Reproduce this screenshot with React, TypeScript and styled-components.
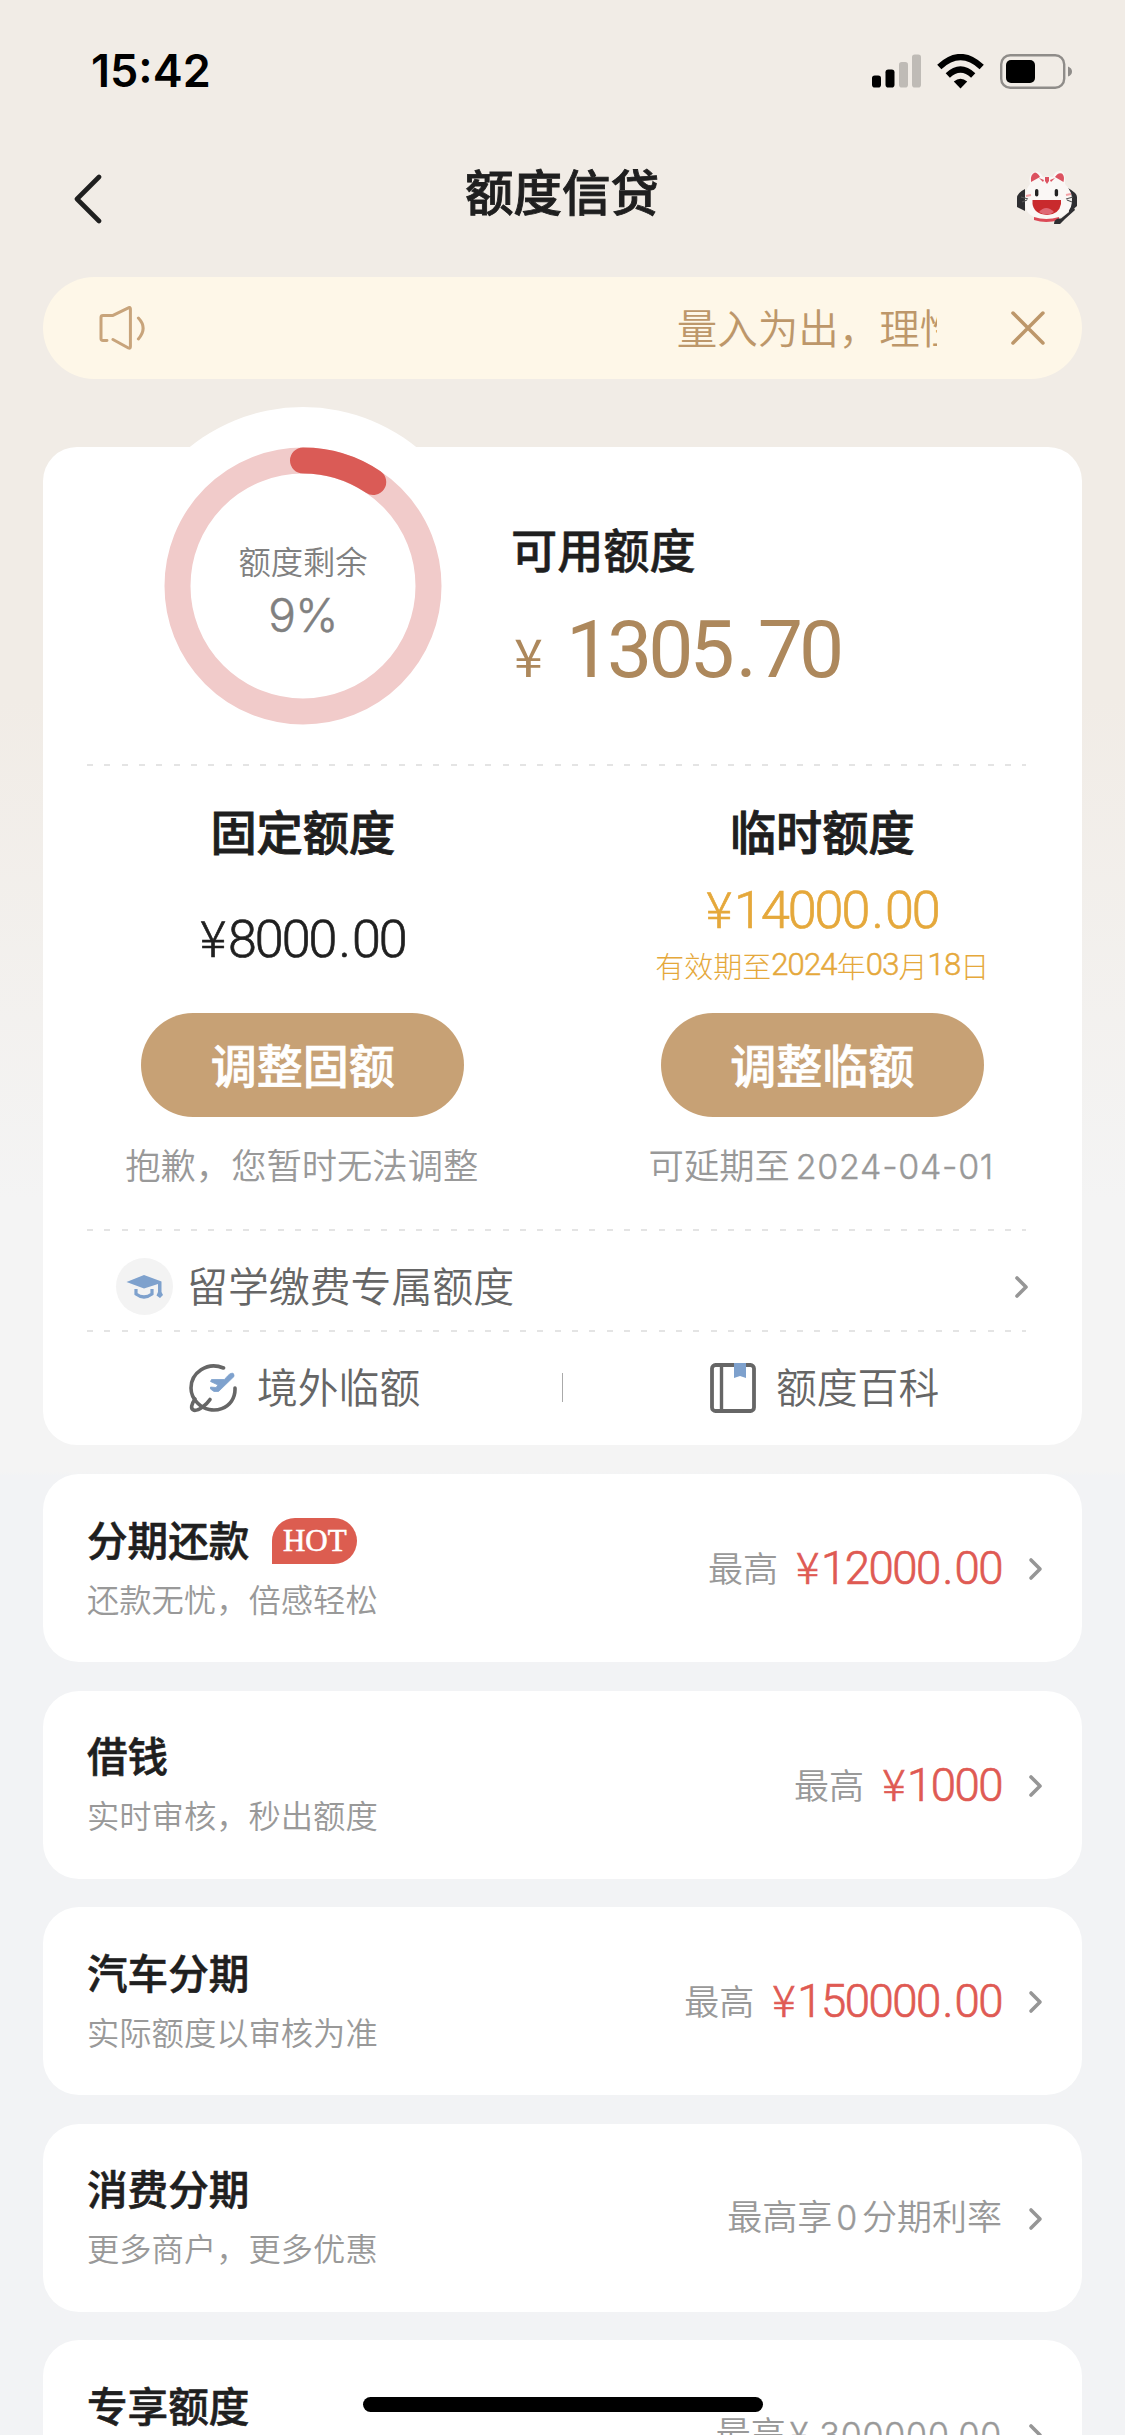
import React from "react";
import styled, { createGlobalStyle } from "styled-components";

const CJK = `"Noto Sans CJK SC", "Noto Sans", sans-serif`;
const NUM = `Roboto, "Noto Sans CJK SC", sans-serif`;

const GlobalStyle = createGlobalStyle`
  * { box-sizing: border-box; }
  body { margin: 0; background: #f2f3f5; }
`;

const Screen = styled.div`
  position: relative;
  width: 1125px;
  height: 2435px;
  overflow: hidden;
  font-family: ${CJK};
  color: #1f1f1f;
  background: linear-gradient(#f1ece6 0, #f1ece6 700px, #f4f4f4 1200px, #f4f4f4 1472px, #f2f3f5 1476px);
`;

const StatusBar = styled.header`
  height: 142px;
  padding: 0 52px 0 91px;
  display: flex;
  align-items: center;
  justify-content: space-between;
`;

const Clock = styled.span`
  font: 600 45px/50px Inter, sans-serif;
  color: #000;
`;

const StatusIcons = styled.div`
  display: flex;
  align-items: center;
  gap: 16px;
  svg { display: block; }
`;

const NavBar = styled.nav`
  height: 134px;
  padding: 0 48px 0 74px;
  display: grid;
  grid-template-columns: 67px 1fr 94px;
  svg { display: block; margin-top: 28px; justify-self: end; }
  svg:first-child { margin-top: 32px; justify-self: start; }
`;

const PageTitle = styled.h1`
  margin: 15px 0 0;
  text-align: center;
  font-size: 48.5px;
  line-height: 66px;
  font-weight: 500;
  -webkit-text-stroke: 0.9px currentColor;
`;

const Notice = styled.section`
  height: 102px;
  margin: 1px 43px 68px;
  padding: 0 37px 0 56px;
  border-radius: 51px;
  background: #fef7e8;
  color: #bd976a;
  display: flex;
  align-items: center;
  svg { display: block; }
`;

const Ticker = styled.div`
  width: 261px;
  margin-left: 531px;
  margin-right: 74px;
  padding-bottom: 3px;
  overflow: hidden;
  white-space: nowrap;
  font-size: 40.5px;
  line-height: 60px;
  font-weight: 350;
`;

const LimitCard = styled.main`
  height: 998px;
  margin: 0 43px 29px;
  border-radius: 34px;
  background: #fff;
`;

const Summary = styled.section`
  height: 317px;
  display: flex;
`;

const Gauge = styled.div`
  width: 360px;
  height: 360px;
  margin: -40px 0 0 80px;
  border-radius: 50%;
  background: #fff;
  display: grid;
  place-items: center;
  > * { grid-area: 1 / 1; }
  svg { margin-top: -2px; }
`;

const GaugeText = styled.div`
  margin-top: 5px;
  text-align: center;
  color: #808080;
  font-size: 32.3px;
  line-height: 48px;
  font-weight: 350;
`;

const GaugePercent = styled.div`
  margin-top: 2px;
  font: 300 46px/58px Inter, sans-serif;
  letter-spacing: -0.6px;
  -webkit-text-stroke: 0.5px currentColor;
`;

const Available = styled.div`
  margin: 71px 0 0 28px;
`;

const Heading = styled.h2<{ $stroke?: number }>`
  margin: 0;
  font-size: 46.2px;
  line-height: 60px;
  font-weight: 500;
  white-space: nowrap;
  -webkit-text-stroke: ${(p) => p.$stroke ?? 0.9}px currentColor;
`;

const BigAmount = styled.div`
  margin: 24px 0 0 3px;
`;

const MoneyText = styled.div<{ $size: number; $track: number; $color: string; $weight: number }>`
  font-family: ${NUM};
  font-size: ${(p) => p.$size}px;
  line-height: 1.2;
  letter-spacing: ${(p) => p.$track}px;
  font-weight: ${(p) => p.$weight};
  -webkit-text-stroke: ${(p) => (p.$weight < 400 ? 0.7 : 0)}px currentColor;
  color: ${(p) => p.$color};
  white-space: nowrap;
`;

const Yen = styled.span<{ $size: string; $gap: string }>`
  font-family: ${CJK};
  font-size: ${(p) => p.$size};
  margin-right: ${(p) => p.$gap};
  line-height: 1;
`;

const Dot = styled.span`
  margin: 0 0.06em 0 0.06em;
`;

const Divider = styled.hr`
  position: relative;
  height: 2px;
  margin: 0 56px 0 44px;
  border: 0;
  background: repeating-linear-gradient(90deg, #e4e4e4 0 6px, transparent 6px 17.32px);
`;

const Columns = styled.section`
  height: 463px;
  display: grid;
  grid-template-columns: 1fr 1fr;
`;

const Column = styled.div`
  padding-top: 34px;
  display: flex;
  flex-direction: column;
  align-items: center;
`;

const AmountBox = styled.div<{ $top: number }>`
  height: 153px;
  padding-top: ${(p) => p.$top}px;
  display: flex;
  flex-direction: column;
  align-items: center;
`;

const Expiry = styled.div`
  margin-top: 1px;
  display: flex;
  align-items: center;
  font-size: 29px;
  line-height: 44px;
  font-weight: 300;
  color: #e5a83b;
  white-space: nowrap;
  b { font: 300 31px/44px ${NUM}; letter-spacing: -0.8px; -webkit-text-stroke: 0.5px currentColor; }
`;

const PillButton = styled.button`
  width: 323px;
  height: 104px;
  padding: 0 0 5px;
  border: 0;
  border-radius: 52px;
  background: #c7a175;
  color: #fff;
  font: 500 46px/60px ${CJK};
  -webkit-text-stroke: 0.7px currentColor;
`;

const Caption = styled.div`
  margin-top: 21px;
  margin-right: 2px;
  font-size: 35.3px;
  line-height: 52px;
  font-weight: 350;
  color: #999;
  white-space: nowrap;
  span { font: 300 34px/52px Inter, sans-serif; letter-spacing: 0.7px; margin-left: 6px; -webkit-text-stroke: 0.4px currentColor; }
`;

const LinkRow = styled.section`
  height: 99px;
  padding: 12px 53px 0 73px;
  display: flex;
  align-items: center;
  color: #666;
  font-size: 40.9px;
  line-height: 60px;
  font-weight: 350;
`;

const RoundIcon = styled.span`
  width: 57px;
  height: 57px;
  margin-right: 14px;
  border-radius: 50%;
  background: #f3f3f3;
  display: grid;
  place-items: center;
`;

const LinkLabel = styled.span`
  flex: 1;
  padding-bottom: 4px;
`;

const Shortcuts = styled.section`
  height: 113px;
  padding-bottom: 2px;
  display: grid;
  grid-template-columns: 519px 1px 519px;
  align-items: center;
  color: #666;
  font-size: 40.8px;
  line-height: 60px;
  font-weight: 350;
`;

const Shortcut = styled.div<{ $pad: number }>`
  padding-left: ${(p) => p.$pad}px;
  display: flex;
  align-items: center;
  gap: 20px;
  span { padding-bottom: 4px; }
`;

const Separator = styled.i`
  height: 29px;
  background: #aaa;
`;

const ProductList = styled.ul`
  margin: 0 43px;
  padding: 0;
  list-style: none;
  display: grid;
  gap: 28.5px;
`;

const Product = styled.li`
  height: 188px;
  padding: 0 39px 0 44px;
  border-radius: 36px;
  background: #fff;
  display: flex;
  align-items: center;
  svg { display: block; margin: 2px 0 0 26px; }
`;

const ProductInfo = styled.div`
  flex: 1;
`;

const ProductName = styled.h3`
  margin: 0;
  height: 60px;
  display: flex;
  align-items: center;
  gap: 23px;
  font-size: 40.6px;
  line-height: 58px;
  padding-bottom: 2px;
  font-weight: 500;
  -webkit-text-stroke: 0.6px currentColor;
`;

const HotBadge = styled.span`
  width: 85px;
  height: 46px;
  margin-top: 4px;
  border-radius: 23px 23px 23px 0;
  background: #dc5d50;
  color: #fff;
  text-align: center;
  font: 400 31px/46px "Liberation Serif", serif;
`;

const ProductNote = styled.div`
  font-size: 32.3px;
  line-height: 57px;
  font-weight: 350;
  color: #999;
`;

const Offer = styled.div`
  display: flex;
  align-items: center;
  gap: 18px;
  font-size: 35px;
  line-height: 52px;
  font-weight: 350;
  color: #999;
`;

const OfferLabel = styled.div`
  padding-bottom: 2px;
`;

const OfferAmount = styled.div`
  padding-top: 3px;
`;

const OfferDigits = styled.span<{ $before: number; $after: number }>`
  margin: 0 ${(p) => p.$after}px 0 ${(p) => p.$before}px;
  font: 300 34px/52px Inter, "Noto Sans CJK SC", sans-serif;
  letter-spacing: 0.8px;
  -webkit-text-stroke: 0.4px currentColor;
`;

const HomeIndicator = styled.div`
  position: absolute;
  left: 363px;
  bottom: 23px;
  width: 400px;
  height: 15px;
  border-radius: 8px;
  background: #000;
`;

type MoneyProps = {
  value: string;
  size: number;
  track: number;
  color: string;
  weight?: number;
  yenSize?: string;
  yenGap?: string;
};

function Money({ value, size, track, color, weight = 300, yenSize = "0.96em", yenGap = "0.07em" }: MoneyProps) {
  const [whole, cents] = value.split(".");
  return (
    <MoneyText $size={size} $track={track} $color={color} $weight={weight}>
      <Yen $size={yenSize} $gap={yenGap}>¥</Yen>
      {whole}
      {cents && <Dot>.</Dot>}
      {cents}
    </MoneyText>
  );
}

const Chevron = () => (
  <svg width="15" height="24" viewBox="0 0 15 24" fill="none" stroke="#969696" strokeWidth="3.6" strokeLinecap="round" strokeLinejoin="round">
    <path d="M3 3L12 12L3 21" />
  </svg>
);

const Signal = () => (
  <svg width="49" height="34" viewBox="0 0 49 34">
    <rect x="0" y="21.5" width="9" height="12" rx="2.8" />
    <rect x="13.5" y="15.5" width="9" height="18" rx="2.8" />
    <rect x="27" y="8" width="9" height="25.500" rx="2.8" fill="#bfbbb6" />
    <rect x="40" y="0.500" width="9" height="33" rx="2.800" fill="#bfbbb6" />
  </svg>
);

const Wifi = () => (
  <svg width="47" height="35" viewBox="0 0 47 35">
    <path d="M23.500 34.500L16.800 27.600Q23.500 22 30.200 27.600Z" strokeLinejoin="round" />
    <g fill="none" stroke="#000" strokeWidth="6.200">
      <path d="M2.300 13Q23.500-6.800 44.700 13" />
      <path d="M10.800 21.500Q23.500 9.600 36.200 21.500" />
    </g>
  </svg>
);

const Battery = () => (
  <svg width="73" height="35" viewBox="0 0 73 35">
    <rect x="1.200" y="1.200" width="63" height="32.600" rx="9" fill="none" stroke="#8f8c89" strokeWidth="2.400" />
    <rect x="6" y="6" width="29" height="23" rx="5" />
    <path d="M68 12.500Q72 14 72 17.500T68 22.500Z" fill="#8f8c89" />
  </svg>
);

const Mascot = () => (
  <svg width="60" height="55" viewBox="0 0 60 55">
    <path d="M8 19Q0 23 0 28V37L8 41ZM51 18Q60 23 60 27V36L52 43Z" fill="#2e2e31" />
    <path d="M13 14Q11 4 17 2Q22 0 26 7Q31 6 36 7Q38 0 44 1Q49 3 48 14Q56 22 55 32Q54 43 43 47Q29 51 17 47Q7 43 8 29Q8 20 13 14Z" fill="#faf7f5" />
    <path d="M14 12Q13 4 18 2.500Q21 3 23 7ZM38 7Q41 2 45 3.500Q48 6 46.500 12Z" fill="#dc5260" />
    <path d="M28 7H32V11L30 14L28 11ZM22 8L26 12L27 10ZM38 8L34 12L33 10Z" fill="#dc5260" />
    <rect x="18" y="19" width="3.400" height="7.500" rx="1.700" fill="#222" />
    <rect x="37.700" y="19" width="3.400" height="7.500" rx="1.700" fill="#222" />
    <path d="M15.500 30H44V34Q42 44.500 30 45Q17 44 15.500 34Z" fill="#c92a2d" />
    <path d="M22 42Q29 34 37 42Q30 47 22 42Z" fill="#df6874" />
    <path d="M9 26L14 25M49 25L54 24" stroke="#f3a1a5" strokeWidth="2" />
    <path d="M4 27L11 29M5 32L10 30M56 27L49 29M55 32L50 30" stroke="#555" strokeWidth="1.200" />
    <path d="M17 47Q29 51 42 47V50Q29 54 17 50Z" fill="#dc4a57" />
    <path d="M57 38L44 48.500Q37 48 37 54H43L48 49L58 40Z" fill="#2e2e31" />
  </svg>
);

const Speaker = () => (
  <svg width="47" height="44" viewBox="0 0 47 44" fill="none" stroke="#c8a47b" strokeWidth="3" strokeLinecap="round" strokeLinejoin="round">
    <path d="M8 34.500H4Q2 34.500 2 32.500V11.500Q2 9.500 4 9.500H13.500L30 1.500Q31.500 1 31.500 3V40.500Q31.500 43 29.500 42L14 33.500" />
    <path d="M39.500 12Q49 22 39.500 33" />
  </svg>
);

const GradCap = () => (
  <svg width="37" height="26" viewBox="0 0 37 26">
    <path d="M0.500 8L18 1L35.500 7.500V18L37 21L34 24L30.500 21.500L32 18V10L18 14.500Z" fill="#7ea1cd" />
    <path d="M10 15V20Q18 26 26 20V15" fill="none" stroke="#7ea1cd" strokeWidth="3.200" />
  </svg>
);

const GlobePlane = () => (
  <svg width="48" height="50" viewBox="0 0 48 50" fill="none" strokeLinecap="round" strokeLinejoin="round">
    <path d="M34.500 5C18-2 2 10 2 25C2 31 4.500 36 8.500 40C22 54 47 46 46 25" stroke="#666" strokeWidth="3.600" />
    <path d="M6 36C2.500 41 1 46 5 47.300C10 48 18 41 21 36.500" stroke="#666" strokeWidth="3.600" />
    <path d="M44 10.500C42 9.500 40 11 35.500 16.500L22.500 16.500L21.500 18.500L29 22L27 24.500L21.500 24L21.500 26L25 28.500H29.500L45 13.500Q45.500 11 44 10.500Z" fill="#7ea1cd" stroke="#7ea1cd" strokeWidth="0.800" />
  </svg>
);

const Book = () => (
  <svg width="46" height="50" viewBox="0 0 46 50">
    <rect x="2" y="2" width="42" height="46" rx="3.500" fill="none" stroke="#666" strokeWidth="3.800" />
    <path d="M11.500 2V48" stroke="#666" strokeWidth="3.400" />
    <path d="M24 0H36V15L30 13L24 15Z" fill="#7ea1cd" />
  </svg>
);

const ARC_R = 125.5;
const ARC_LEN = 2 * Math.PI * ARC_R;

const RED = "#df5a53";

const products = [
  { name: "分期还款", note: "还款无忧，倍感轻松", hot: true, amount: "12000.00" },
  { name: "借钱", note: "实时审核，秒出额度", amount: "1000" },
  { name: "汽车分期", note: "实际额度以审核为准", amount: "150000.00" },
  {
    name: "消费分期",
    note: "更多商户，更多优惠",
    offer: (
      <OfferLabel>
        最高享<OfferDigits $before={4} $after={4}>0</OfferDigits>分期利率
      </OfferLabel>
    ),
  },
  {
    name: "专享额度",
    note: "专属客户，专享额度",
    offer: (
      <OfferLabel>
        最高<OfferDigits $before={4} $after={0}>¥ 300000.00</OfferDigits>
      </OfferLabel>
    ),
  },
];

export default function App() {
  return (
    <Screen>
      <GlobalStyle />
      <StatusBar>
        <Clock>15:42</Clock>
        <StatusIcons>
          <Signal />
          <Wifi />
          <Battery />
        </StatusIcons>
      </StatusBar>
      <NavBar>
        <svg width="28" height="50" viewBox="0 0 28 50" fill="none" stroke="#1f1f1f" strokeWidth="4.600" strokeLinecap="round" strokeLinejoin="round">
          <path d="M25 3L3 25L25 47" />
        </svg>
        <PageTitle>额度信贷</PageTitle>
        <Mascot />
      </NavBar>
      <Notice>
        <Speaker />
        <Ticker>量入为出，理性消费</Ticker>
        <svg width="34" height="34" viewBox="0 0 34 34" stroke="#bd976a" strokeWidth="3.600" strokeLinecap="round">
          <path d="M2 2L32 32M32 2L2 32" />
        </svg>
      </Notice>
      <LimitCard>
        <Summary>
          <Gauge>
            <svg width="278" height="278" viewBox="0 0 278 278" fill="none" strokeWidth="26">
              <circle cx="139" cy="139" r={ARC_R} stroke="#f1cbca" />
              <circle
                cx="139"
                cy="139"
                r={ARC_R}
                stroke="#da5b56"
                strokeLinecap="round"
                strokeDasharray={`${ARC_LEN * 0.0945} ${ARC_LEN}`}
                transform="rotate(-90 139 139)"
              />
            </svg>
            <GaugeText>
              额度剩余
              <GaugePercent>9%</GaugePercent>
            </GaugeText>
          </Gauge>
          <Available>
            <Heading $stroke={0.5}>可用额度</Heading>
            <BigAmount>
              <Money value="1305.70" size={80.5} track={-4} color="#ad885c" weight={400} yenSize="52px" yenGap="27px" />
            </BigAmount>
          </Available>
        </Summary>
        <Divider />
        <Columns>
          <Column>
            <Heading>固定额度</Heading>
            <AmountBox $top={49}>
              <Money value="8000.00" size={52} track={-2} color="#1f1f1f" />
            </AmountBox>
            <PillButton>调整固额</PillButton>
            <Caption>抱歉，您暂时无法调整</Caption>
          </Column>
          <Column>
            <Heading>临时额度</Heading>
            <AmountBox $top={20}>
              <Money value="14000.00" size={52} track={-2} color="#e5a83b" />
              <Expiry>
                有效期至<b>2024</b>年<b>03</b>月<b>18</b>日
              </Expiry>
            </AmountBox>
            <PillButton>调整临额</PillButton>
            <Caption>可延期至<span>2024-04-01</span></Caption>
          </Column>
        </Columns>
        <Divider />
        <LinkRow>
          <RoundIcon>
            <GradCap />
          </RoundIcon>
          <LinkLabel>留学缴费专属额度</LinkLabel>
          <Chevron />
        </LinkRow>
        <Divider />
        <Shortcuts>
          <Shortcut $pad={146}>
            <GlobePlane />
            <span>境外临额</span>
          </Shortcut>
          <Separator />
          <Shortcut $pad={147}>
            <Book />
            <span>额度百科</span>
          </Shortcut>
        </Shortcuts>
      </LimitCard>
      <ProductList>
        {products.map((p) => (
          <Product key={p.name}>
            <ProductInfo>
              <ProductName>
                {p.name}
                {p.hot && <HotBadge>HOT</HotBadge>}
              </ProductName>
              <ProductNote>{p.note}</ProductNote>
            </ProductInfo>
            <Offer>
              {p.amount ? (
                <>
                  <OfferLabel>最高</OfferLabel>
                  <OfferAmount>
                    <Money value={p.amount} size={45.5} track={-1.5} color={RED} />
                  </OfferAmount>
                </>
              ) : (
                p.offer
              )}
            </Offer>
            <Chevron />
          </Product>
        ))}
      </ProductList>
      <HomeIndicator />
    </Screen>
  );
}
